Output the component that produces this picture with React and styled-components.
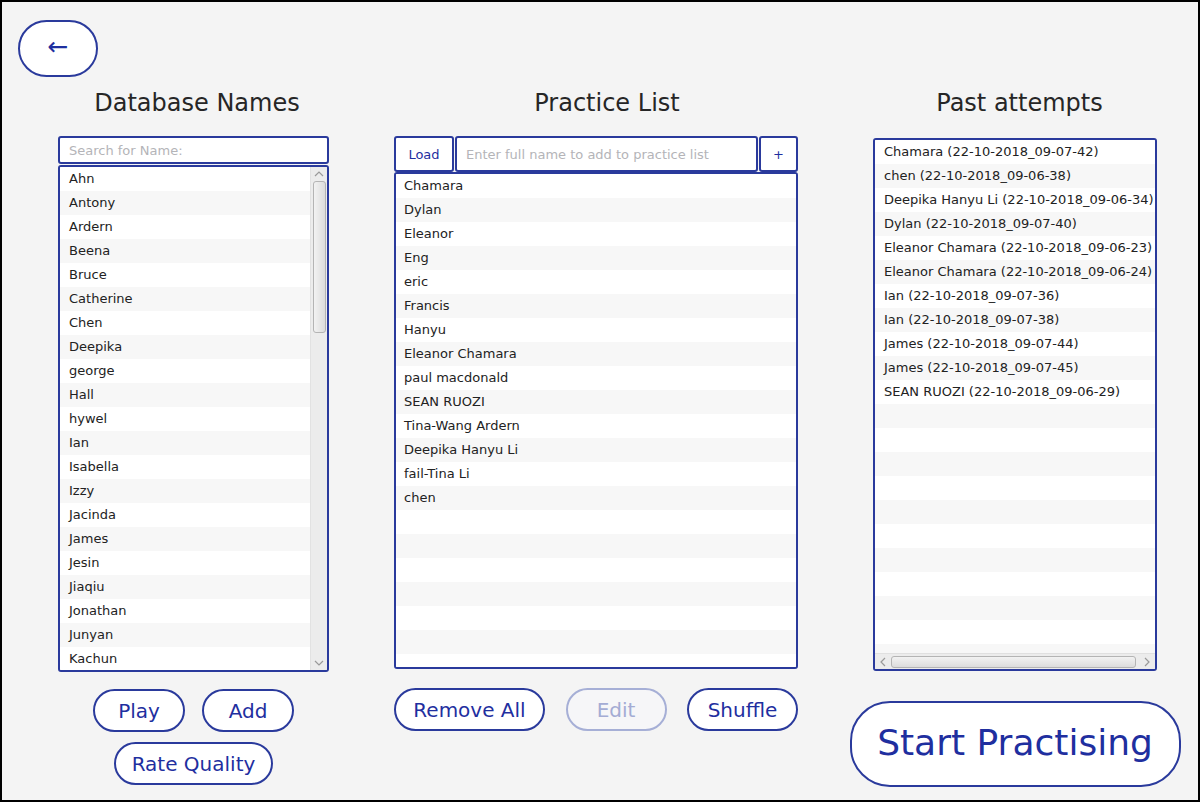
import React from "react";
import styled, { createGlobalStyle } from "styled-components";

const databaseNames = [
  "Ahn", "Antony", "Ardern", "Beena", "Bruce", "Catherine", "Chen", "Deepika",
  "george", "Hall", "hywel", "Ian", "Isabella", "Izzy", "Jacinda", "James",
  "Jesin", "Jiaqiu", "Jonathan", "Junyan", "Kachun",
];

const practiceNames = [
  "Chamara", "Dylan", "Eleanor", "Eng", "eric", "Francis", "Hanyu",
  "Eleanor Chamara", "paul macdonald", "SEAN RUOZI", "Tina-Wang Ardern",
  "Deepika Hanyu Li", "fail-Tina Li", "chen",
];

const attempts = [
  "Chamara (22-10-2018_09-07-42)",
  "chen (22-10-2018_09-06-38)",
  "Deepika Hanyu Li (22-10-2018_09-06-34)",
  "Dylan (22-10-2018_09-07-40)",
  "Eleanor Chamara (22-10-2018_09-06-23)",
  "Eleanor Chamara (22-10-2018_09-06-24)",
  "Ian (22-10-2018_09-07-36)",
  "Ian (22-10-2018_09-07-38)",
  "James (22-10-2018_09-07-44)",
  "James (22-10-2018_09-07-45)",
  "SEAN RUOZI (22-10-2018_09-06-29)",
];

const pad = (list, n) => [...list, ...Array(Math.max(0, n - list.length)).fill("")];

const Chevron = ({ dir }) => {
  const d = {
    up: "M1 6 L5 2 L9 6",
    down: "M1 2 L5 6 L9 2",
    left: "M6 1 L2 5 L6 9",
    right: "M2 1 L6 5 L2 9",
  }[dir];
  const horiz = dir === "left" || dir === "right";
  return (
    <svg width={horiz ? 8 : 10} height={horiz ? 10 : 8} viewBox={horiz ? "0 0 8 10" : "0 0 10 8"}>
      <path d={d} fill="none" stroke="#9a9a9a" strokeWidth="1.2" />
    </svg>
  );
};

const App = () => {
  return (
    <>
      <GlobalStyle />
      <Frame>
        <TopBar>
          <BackButton>←</BackButton>
        </TopBar>
        <Columns>
          <Column $width={271}>
            <Header $shift={3.5}>Database Names</Header>
            <SearchInput placeholder="Search for Name:" />
            <ListBox $height={507} $mt={1}>
              <Rows>
                {databaseNames.map((n, i) => (
                  <Row key={i} $odd={i % 2 === 1}>{n}</Row>
                ))}
              </Rows>
              <VScroll>
                <ArrowCell><Chevron dir="up" /></ArrowCell>
                <VThumb />
                <Spacer />
                <ArrowCell><Chevron dir="down" /></ArrowCell>
              </VScroll>
            </ListBox>
            <ButtonWrap $mt={17}>
              <Pill $w={92}>Play</Pill>
              <Pill $w={92}>Add</Pill>
              <Pill $w={159}>Rate Quality</Pill>
            </ButtonWrap>
          </Column>

          <Column $width={404} $ml={65}>
            <Header $shift={11}>Practice List</Header>
            <Toolbar>
              <SmallButton $w={60}>Load</SmallButton>
              <AddInput placeholder="Enter full name to add to practice list" />
              <SmallButton $w={39}>+</SmallButton>
            </Toolbar>
            <ListBox $height={497}>
              <Rows>
                {pad(practiceNames, 21).map((n, i) => (
                  <Row key={i} $odd={i % 2 === 1} $pl={8}>{n}</Row>
                ))}
              </Rows>
            </ListBox>
            <SpreadRow>
              <Pill $w={151}>Remove All</Pill>
              <Pill $w={101} disabled>Edit</Pill>
              <Pill $w={111}>Shuffle</Pill>
            </SpreadRow>
          </Column>

          <Column $width={330} $ml={52}>
            <Header $shift={4.5}>Past attempts</Header>
            <AttemptBox>
              <Rows>
                {pad(attempts, 22).map((n, i) => (
                  <Row key={i} $odd={i % 2 === 1}>{n}</Row>
                ))}
              </Rows>
              <HScroll>
                <HArrow><Chevron dir="left" /></HArrow>
                <HThumb />
                <HArrow><Chevron dir="right" /></HArrow>
              </HScroll>
            </AttemptBox>
            <StartButton>Start Practising</StartButton>
          </Column>
        </Columns>
      </Frame>
    </>
  );
};

export default App;

const BLUE = "#2a3a9c";
const TEXT_BLUE = "#1f2f9f";

const GlobalStyle = createGlobalStyle`
  * { box-sizing: border-box; }
  body {
    margin: 0;
    font-family: "DejaVu Sans", "Liberation Sans", sans-serif;
    background: #000;
  }
`;

const Frame = styled.div`
  width: 1200px;
  height: 802px;
  border: 2px solid #000;
  background-color: #f4f4f4;
  overflow: hidden;
`;

const TopBar = styled.div`
  display: flex;
  padding: 18px 0 0 16px;
  height: 81px;
`;

const BackButton = styled.button`
  width: 80px;
  height: 57px;
  border: 2px solid ${BLUE};
  border-radius: 29px;
  background: #fff;
  color: ${TEXT_BLUE};
  font-family: "DejaVu Sans", sans-serif;
  font-size: 25px;
  display: flex;
  align-items: center;
  justify-content: center;
  padding: 0 0 4px;
  cursor: pointer;
`;

const Columns = styled.div`
  display: flex;
  padding-left: 56px;
`;

const Column = styled.div`
  width: ${(p) => p.$width}px;
  margin-left: ${(p) => p.$ml || 0}px;
  display: flex;
  flex-direction: column;
  align-items: center;
`;

const Header = styled.div`
  width: 100%;
  height: 40px;
  line-height: 40px;
  text-align: center;
  font-size: 24px;
  color: #262626;
  padding-left: ${(p) => p.$shift * 2}px;
  margin-bottom: 13px;
`;

const SearchInput = styled.input`
  width: 100%;
  height: 28px;
  border: 2px solid ${BLUE};
  border-radius: 3px;
  background: #fff;
  padding: 0 9px;
  font-family: "DejaVu Sans", sans-serif;
  font-size: 13px;
  outline: none;
  &::placeholder {
    color: #b4b4b8;
  }
`;

const ListBox = styled.div`
  width: 100%;
  height: ${(p) => p.$height}px;
  margin-top: ${(p) => p.$mt || 0}px;
  border: 2px solid ${BLUE};
  border-radius: 3px;
  background: #fff;
  display: flex;
  overflow: hidden;
`;

const Rows = styled.div`
  flex: 1;
  min-width: 0;
  overflow: hidden;
`;

const Row = styled.div`
  height: 24px;
  line-height: 24px;
  padding-left: ${(p) => p.$pl || 9}px;
  font-size: 13px;
  color: #222;
  white-space: nowrap;
  background: ${(p) => (p.$odd ? "#f7f7f7" : "#fff")};
`;

const VScroll = styled.div`
  width: 17px;
  background: #ececec;
  border-left: 1px solid #e2e2e2;
  display: flex;
  flex-direction: column;
  align-items: center;
`;

const ArrowCell = styled.div`
  height: 14px;
  display: flex;
  align-items: center;
  justify-content: center;
`;

const VThumb = styled.div`
  width: 13px;
  height: 152px;
  border: 1px solid #b4b4b4;
  border-radius: 3px;
  background: linear-gradient(to right, #f2f2f2, #dcdcdc);
`;

const Spacer = styled.div`
  flex: 1;
`;

const ButtonWrap = styled.div`
  margin-top: ${(p) => p.$mt}px;
  width: 220px;
  display: flex;
  flex-wrap: wrap;
  justify-content: center;
  column-gap: 17px;
  row-gap: 10px;
`;

const Pill = styled.button`
  width: ${(p) => p.$w}px;
  height: 43px;
  border: 2px solid ${(p) => (p.disabled ? "#a6afd6" : BLUE)};
  border-radius: 22px;
  background: ${(p) => (p.disabled ? "#f6f6f8" : "#fff")};
  color: ${(p) => (p.disabled ? "#a4acd4" : TEXT_BLUE)};
  font-family: "DejaVu Sans", sans-serif;
  font-size: 20px;
  padding: 0;
  cursor: pointer;
`;

const Toolbar = styled.div`
  width: 100%;
  height: 36px;
  display: flex;
  gap: 1px;
`;

const SmallButton = styled.button`
  width: ${(p) => p.$w}px;
  height: 36px;
  border: 2px solid ${BLUE};
  border-radius: 3px;
  background: #fff;
  color: ${TEXT_BLUE};
  font-family: "DejaVu Sans", sans-serif;
  font-size: 13px;
  padding: 0;
  cursor: pointer;
`;

const AddInput = styled.input`
  flex: 1;
  min-width: 0;
  height: 36px;
  border: 2px solid ${BLUE};
  border-radius: 3px;
  background: #fff;
  padding: 0 9px;
  font-family: "DejaVu Sans", sans-serif;
  font-size: 13px;
  outline: none;
  &::placeholder {
    color: #b4b4b8;
  }
`;

const SpreadRow = styled.div`
  width: 100%;
  margin-top: 19px;
  display: flex;
  justify-content: space-between;
`;

const AttemptBox = styled.div`
  width: 284px;
  height: 533px;
  margin-top: 2px;
  border: 2px solid ${BLUE};
  border-radius: 3px;
  background: #fff;
  display: flex;
  flex-direction: column;
  overflow: hidden;
`;

const HScroll = styled.div`
  height: 16px;
  flex-shrink: 0;
  background: #ececec;
  border-top: 1px solid #e0e0e0;
  display: flex;
  align-items: center;
  padding: 0 2px;
`;

const HArrow = styled.div`
  width: 12px;
  display: flex;
  justify-content: center;
`;

const HThumb = styled.div`
  width: 245px;
  height: 12px;
  margin: 0 2px;
  border: 1px solid #b4b4b4;
  border-radius: 3px;
  background: linear-gradient(to bottom, #f2f2f2, #dcdcdc);
  margin-right: auto;
`;

const StartButton = styled.button`
  margin-top: 30px;
  width: 331px;
  height: 86px;
  border: 2px solid ${BLUE};
  border-radius: 40px;
  background: #fff;
  color: ${TEXT_BLUE};
  font-family: "DejaVu Sans", sans-serif;
  font-size: 36px;
  padding: 0 0 4px;
  cursor: pointer;
`;
